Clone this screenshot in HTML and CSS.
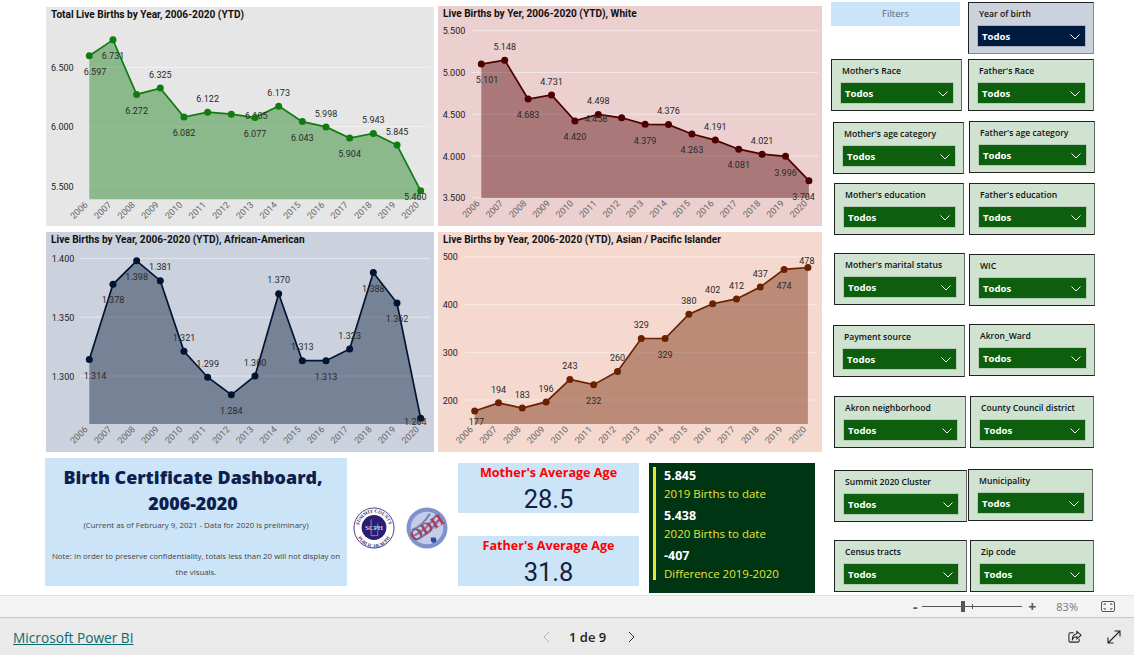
FILE: index.html
```html
<!DOCTYPE html>
<html lang="en">
<head>
  <meta charset="UTF-8">
  <meta name="viewport" content="width=device-width, initial-scale=1.0">
  <title>Birth Certificate Dashboard</title>
  <link rel="stylesheet" href="styles.css">
</head>
<body>

  <div id="report">
    <div id="left">

      <!-- Charts -->
      <div id="charts">
        <div class="chart chart-total">
          <div class="chart-title">Total Live Births by Year, 2006-2020 (YTD)</div>
          <svg id="chartTotal"></svg>
        </div>
        <div class="chart chart-white">
          <div class="chart-title">Live Births by Yer, 2006-2020 (YTD), White</div>
          <svg id="chartWhite"></svg>
        </div>
        <div class="chart chart-black">
          <div class="chart-title">Live Births by Year, 2006-2020 (YTD), African-American</div>
          <svg id="chartBlack"></svg>
        </div>
        <div class="chart chart-asian">
          <div class="chart-title">Live Births by Year, 2006-2020 (YTD), Asian / Pacific Islander</div>
          <svg id="chartAsian"></svg>
        </div>
      </div>

      <!-- Bottom row -->
      <div id="bottom">
        <div class="intro">
          <h1>Birth Certificate Dashboard, 2006-2020</h1>
          <p class="intro-date">(Current as of February 9, 2021 - Data for 2020 is preliminary)</p>
          <p class="intro-note">Note: In order to preserve confidentiality, totals less than 20 will not display on the visuals.</p>
        </div>

        <div class="logos">
          <svg class="logo" viewBox="0 0 44 44">
            <defs>
              <path id="arcTop" d="M6 22a16 16 0 0 1 32 0"/>
              <path id="arcBottom" d="M3.500 24a18.500 18.500 0 0 0 37 0"/>
            </defs>
            <circle cx="22" cy="22" r="21" fill="#fff" stroke="#4a3a86" stroke-width="1"/>
            <circle cx="22" cy="21.500" r="13" fill="#2b1d72"/>
            <path d="M19 13v17h7V17" fill="none" stroke="#c9c5e6" stroke-width=".6"/>
            <text class="logo-ring" font-size="5"><textPath href="#arcTop" startOffset="50%" text-anchor="middle">SUMMIT COUNTY</textPath></text>
            <text class="logo-ring" font-size="5"><textPath href="#arcBottom" startOffset="50%" text-anchor="middle">PUBLIC HEALTH</textPath></text>
            <text class="logo-mark" x="22" y="24" font-size="7.500">SCPH</text>
          </svg>
          <svg class="logo" viewBox="0 0 44 44">
            <circle cx="22" cy="22" r="21.500" fill="#7f92cb"/>
            <circle cx="22" cy="22" r="17" fill="#c3cde8"/>
            <path d="M8 30c8-3 18-12 24-22M11 34c8-3 19-13 25-22M6 24c7-2 14-9 19-17" fill="none" stroke="#6d80c0" stroke-width="2.200"/>
            <text class="logo-odh" x="22" y="27.500" font-size="17" transform="rotate(-32 22 22)">ODH</text>
            <path d="M26 32h5l1 4-3 2-3-2z" fill="#2e4aa8"/>
          </svg>
        </div>

        <div class="kpis">
          <div class="kpi">
            <div class="kpi-title">Mother's Average Age</div>
            <div class="kpi-value">28.5</div>
          </div>
          <div class="kpi">
            <div class="kpi-title">Father's Average Age</div>
            <div class="kpi-value">31.8</div>
          </div>
        </div>

        <div class="totals">
          <div class="totals-inner">
            <div class="total-item">
              <div class="total-num">5.845</div>
              <div class="total-label">2019 Births to date</div>
            </div>
            <div class="total-item">
              <div class="total-num">5.438</div>
              <div class="total-label">2020 Births to date</div>
            </div>
            <div class="total-item">
              <div class="total-num">-407</div>
              <div class="total-label">Difference 2019-2020</div>
            </div>
          </div>
        </div>
      </div>
    </div>

    <!-- Filters -->
    <div id="filters">
      <div class="filters-head">Filters</div>
      <div class="slicer navy r-a"><span>Year of birth</span><div class="drop">Todos<svg viewBox="0 0 10 6"><path d="M.5.5 5 5 9.5.5"/></svg></div></div>

      <div class="slicer l-a"><span>Mother's Race</span><div class="drop">Todos<svg viewBox="0 0 10 6"><path d="M.5.5 5 5 9.5.5"/></svg></div></div>
      <div class="slicer r-a"><span>Father's Race</span><div class="drop">Todos<svg viewBox="0 0 10 6"><path d="M.5.5 5 5 9.5.5"/></svg></div></div>

      <div class="slicer l-b down"><span>Mother's age category</span><div class="drop">Todos<svg viewBox="0 0 10 6"><path d="M.5.5 5 5 9.5.5"/></svg></div></div>
      <div class="slicer r-b"><span>Father's age category</span><div class="drop">Todos<svg viewBox="0 0 10 6"><path d="M.5.5 5 5 9.5.5"/></svg></div></div>

      <div class="slicer l-c"><span>Mother's education</span><div class="drop">Todos<svg viewBox="0 0 10 6"><path d="M.5.5 5 5 9.5.5"/></svg></div></div>
      <div class="slicer r-b"><span>Father's education</span><div class="drop">Todos<svg viewBox="0 0 10 6"><path d="M.5.5 5 5 9.5.5"/></svg></div></div>

      <div class="slicer l-d"><span>Mother's marital status</span><div class="drop">Todos<svg viewBox="0 0 10 6"><path d="M.5.5 5 5 9.5.5"/></svg></div></div>
      <div class="slicer r-b down"><span>WIC</span><div class="drop">Todos<svg viewBox="0 0 10 6"><path d="M.5.5 5 5 9.5.5"/></svg></div></div>

      <div class="slicer l-e down"><span>Payment source</span><div class="drop">Todos<svg viewBox="0 0 10 6"><path d="M.5.5 5 5 9.5.5"/></svg></div></div>
      <div class="slicer r-b"><span>Akron_Ward</span><div class="drop">Todos<svg viewBox="0 0 10 6"><path d="M.5.5 5 5 9.5.5"/></svg></div></div>

      <div class="slicer l-f"><span>Akron neighborhood</span><div class="drop">Todos<svg viewBox="0 0 10 6"><path d="M.5.5 5 5 9.5.5"/></svg></div></div>
      <div class="slicer r-c"><span>County Council district</span><div class="drop">Todos<svg viewBox="0 0 10 6"><path d="M.5.5 5 5 9.5.5"/></svg></div></div>

      <div class="slicer l-g down"><span>Summit 2020 Cluster</span><div class="drop">Todos<svg viewBox="0 0 10 6"><path d="M.5.5 5 5 9.5.5"/></svg></div></div>
      <div class="slicer r-d"><span>Municipality</span><div class="drop">Todos<svg viewBox="0 0 10 6"><path d="M.5.5 5 5 9.5.5"/></svg></div></div>

      <div class="slicer l-g"><span>Census tracts</span><div class="drop">Todos<svg viewBox="0 0 10 6"><path d="M.5.5 5 5 9.5.5"/></svg></div></div>
      <div class="slicer r-c"><span>Zip code</span><div class="drop">Todos<svg viewBox="0 0 10 6"><path d="M.5.5 5 5 9.5.5"/></svg></div></div>
    </div>
  </div>

  <!-- Zoom bar -->
  <div id="zoombar">
    <span class="zoom-sign">-</span>
    <div class="zoom-track"><i class="zoom-tick"></i><i class="zoom-thumb"></i></div>
    <span class="zoom-sign">+</span>
    <span class="zoom-pct">83%</span>
    <svg class="zoom-fit" viewBox="0 0 14 11">
      <rect x=".5" y=".5" width="13" height="10" rx="1.5"/>
      <path d="M3 4V3h2M11 4V3H9M3 7v1h2M11 7v1H9"/>
    </svg>
  </div>

  <!-- Footer -->
  <div id="footer">
    <a class="brand" href="#">Microsoft Power BI</a>
    <div class="pager">
      <svg class="pager-off" viewBox="0 0 7 12"><path d="M6 1 1 6l5 5"/></svg>
      <span>1 de 9</span>
      <svg viewBox="0 0 7 12"><path d="M1 1l5 5-5 5"/></svg>
    </div>
    <div class="foot-icons">
      <svg viewBox="0 0 15 14">
        <path d="M6 2.500H2.500a1.500 1.500 0 0 0-1.500 1.500v7a1.500 1.500 0 0 0 1.500 1.500h8a1.500 1.500 0 0 0 1.500-1.500V9"/>
        <path d="M9.500 1 14 5l-4.500 4V6.800C7 6.800 5.200 8 4.500 10.500 4.500 6.800 6.500 3.800 9.500 3.500z"/>
      </svg>
      <svg viewBox="0 0 14 14">
        <path d="M1 13 13 1M7.500 1H13v5.500M1 7.500V13h5.500"/>
      </svg>
    </div>
  </div>

  <script src="charts.js"></script>
</body>
</html>
```

FILE: styles.css
```css
/* ====== RESET ====== */
html, body {
  margin: 0;
  padding: 0;
}

body {
  width: 1134px;
  height: 655px;
  overflow: hidden;
  background: white;
  font-family: 'Open Sans', sans-serif;
}

/* ====== REPORT CANVAS ====== */
#report {
  display: grid;
  grid-template-columns: 831px 1fr;
  height: 595px;
}

#left {
  padding: 6px 0 0 45px;
}

#charts {
  display: grid;
  grid-template-columns: 388px 384px;
  grid-template-rows: 220px 220px;
  column-gap: 4px;
  row-gap: 6px;
  margin-left: 1px;
}

.chart {
  display: flex;
  flex-direction: column;
}

.chart svg {
  flex: 1;
  min-height: 0;
  display: block;
  overflow: visible;
}

.chart-title {
  height: 16px;
  line-height: 16px;
  padding-left: 5px;
  font-family: 'Roboto', sans-serif;
  font-size: 10.1px;
  font-weight: 700;
  color: #111;
  white-space: nowrap;
}

.chart-total { background: #e6e6e6; margin-top: 1px; height: 219px; }
.chart-white { background: #eccfcf; }
.chart-black { background: #cbd2dd; }
.chart-asian { background: #f5d9cf; }

/* chart text */
.chart text {
  font-family: 'Roboto', sans-serif;
  font-size: 9px;
}
.tick-label { fill: #222; }
.year-label { fill: #666; }
.data-label { fill: #2a2a2a; text-anchor: middle; }

/* ====== BOTTOM ROW ====== */
#bottom {
  display: flex;
  margin-top: 6px;
}

.intro {
  width: 302px;
  height: 128px;
  background: #cce4f8;
  text-align: center;
  color: #444;
}

.intro h1 {
  margin: 6px 0 0;
  padding: 0 6px 0 0;
  font-size: 17.9px;
  line-height: 26px;
  font-weight: 800;
  color: #0c1f4f;
}

.intro-date {
  margin: 2px 0 0;
  font-size: 7.9px;
  line-height: 14px;
}

.intro-note {
  margin: 16px 0 0;
  font-size: 7.9px;
  line-height: 16px;
}

.logos {
  width: 111px;
  display: flex;
  justify-content: center;
  gap: 11px;
  padding: 49px 4px 0 0;
  box-sizing: border-box;
}

.logo {
  width: 42px;
  height: 42px;
}

.logo text { text-anchor: middle; }
.logo-ring { fill: #2b1d72; font-family: 'Liberation Serif', serif; font-weight: 700; }
.logo-mark { fill: white; font-family: 'Liberation Serif', serif; }
.logo-odh { fill: #b23a55; font-family: 'Liberation Serif', serif; font-weight: 700; }

.kpis {
  width: 181px;
  padding-top: 5px;
  display: flex;
  flex-direction: column;
  gap: 23px;
}

.kpi {
  height: 50px;
  background: #cce4f8;
  text-align: center;
}

.kpi-title {
  height: 20px;
  line-height: 19px;
  font-size: 12.6px;
  font-weight: 700;
  color: #f00;
}

.kpi-value {
  line-height: 32px;
  font-family: 'Roboto', sans-serif;
  font-size: 25.5px;
  color: #14213d;
}

.totals {
  width: 166px;
  height: 130px;
  margin: 5px 0 0 10px;
  padding: 4px 0 0 4px;
  box-sizing: border-box;
  background: #003513;
}

.totals-inner {
  height: 113px;
  padding-left: 8px;
  border-left: 3px solid #e6e635;
  display: flex;
  flex-direction: column;
  gap: 5px;
}

.total-item { height: 35px; }

.total-num {
  line-height: 18px;
  font-size: 12.5px;
  font-weight: 700;
  color: white;
}

.total-label {
  line-height: 17px;
  font-size: 11.5px;
  color: #e6e635;
  white-space: nowrap;
}

/* ====== SLICERS ====== */
#filters {
  display: grid;
  grid-template-columns: 137px 128px;
  grid-template-rows: 57px 62px 62px 70px 71px 72px 73px 71px 52px;
  padding-top: 2px;
  align-items: start;
}

.filters-head {
  width: 129px;
  height: 24px;
  line-height: 24px;
  background: #cce4f8;
  text-align: center;
  font-size: 9.5px;
  color: #55687b;
}

.slicer {
  height: 52px;
  box-sizing: border-box;
  padding: 4px 8px 0 9px;
  background: #cfe3d0;
  border: 1px solid #222;
  border-right-color: #666;
}

.slicer span {
  display: block;
  height: 19px;
  line-height: 15px;
  padding-left: 1px;
  font-size: 8.6px;
  font-weight: 600;
  color: #111;
  white-space: nowrap;
}

.drop {
  height: 20px;
  box-sizing: border-box;
  display: flex;
  align-items: center;
  justify-content: space-between;
  padding: 1px 5px 0 4px;
  background: #0d5f0d;
  box-shadow: 0 0 0 1px #b5ccb6;
  font-size: 9.6px;
  font-weight: 700;
  color: white;
}

.drop svg {
  width: 10px;
  height: 6px;
  fill: none;
  stroke: white;
  stroke-width: 1;
}

.navy { background: #cbd2dd; border-right-color: #888; border-bottom-color: #888; }
.navy .drop { background: #001a40; box-shadow: 0 0 0 1px #aab3c2; }

/* the visuals on the report are not quite lined up */
.down { margin-top: 1px; }
.l-a { margin: 0 6px 0 0; }
.l-b { margin-left: 2px; margin-right: 4px; }
.l-c { margin-left: 3px; margin-right: 4px; }
.l-d { margin-left: 3px; margin-right: 3px; }
.l-e { margin-left: 2px; margin-right: 3px; }
.l-f { margin-left: 3px; margin-right: 2px; }
.l-g { margin-left: 3px; margin-right: 1px; }
.r-a { margin-left: 0; margin-right: 2px; }
.r-b { margin-left: 1px; margin-right: 1px; }
.r-c { margin-left: 2px; margin-right: 2px; }
.r-d { margin-left: 0; margin-right: 3px; }

/* ====== ZOOM BAR ====== */
#zoombar {
  height: 23px;
  box-sizing: border-box;
  display: flex;
  align-items: center;
  justify-content: flex-end;
  padding-right: 19px;
  background: #f3f3f3;
  border-top: 1px solid #e1e1e1;
  border-bottom: 1px solid #c8c8c8;
  color: #555;
}

.zoom-sign {
  width: 14px;
  text-align: center;
  font-size: 14px;
  font-weight: 700;
}

.zoom-track {
  position: relative;
  width: 100px;
  height: 1px;
  margin: 0 3px 0 0;
  background: #555;
}

.zoom-tick {
  position: absolute;
  left: 50px;
  top: -2px;
  width: 1px;
  height: 5px;
  background: #555;
}

.zoom-thumb {
  position: absolute;
  left: 39px;
  top: -5px;
  width: 4px;
  height: 11px;
  background: #555;
}

.zoom-pct {
  margin: 0 23px 0 17px;
  font-size: 11px;
  color: #777;
}

.zoom-fit {
  width: 14px;
  height: 11px;
  fill: none;
  stroke: #555;
  stroke-width: 1;
}

/* ====== FOOTER ====== */
#footer {
  height: 37px;
  box-sizing: border-box;
  padding-top: 1px;
  display: grid;
  grid-template-columns: 543px 105px 1fr;
  align-items: center;
  background: #eaeaea;
}

.brand {
  padding-left: 13px;
  font-size: 13.7px;
  color: #0b6a6e;
}

.pager {
  display: flex;
  align-items: center;
  font-size: 13px;
  font-weight: 600;
  color: #222;
}

.pager span {
  margin: 0 22px 0 19px;
}

.pager svg {
  width: 7px;
  height: 12px;
  fill: none;
  stroke: #333;
  stroke-width: 1;
}

.pager .pager-off { stroke: #b5b5b5; }

.foot-icons {
  display: flex;
  justify-content: flex-end;
  gap: 25px;
  padding-right: 13px;
}

.foot-icons svg {
  width: 14px;
  height: 14px;
  fill: none;
  stroke: #222;
  stroke-width: 1.1;
}
```

FILE: charts.js
```js
// Chart data, coordinates are page pixels
const years = [2006, 2007, 2008, 2009, 2010, 2011, 2012, 2013, 2014, 2015, 2016, 2017, 2018, 2019, 2020];
const UP = [0, -13.5];
const DOWN = [0, 16];

const charts = [
  {
    id: 'chartTotal', color: '#107c10', left: 89.3, step: 23.67, refValue: 6000, refY: 126.7, scale: 0.1188, base: 199.3,
    gridFrom: 89, gridTo: 430, tickX: 51, ticks: [5500, 6000, 6500],
    values: [6597, 6731, 6272, 6325, 6082, 6122, 6105, 6077, 6173, 6043, 5998, 5904, 5943, 5845, 5460],
    labels: [[5.7, 16.3], DOWN, DOWN, UP, DOWN, UP, [25, 1.3], DOWN, UP, DOWN, UP, DOWN, UP, UP, [-5.3, 5.7]]
  },
  {
    id: 'chartWhite', color: '#4e0000', left: 481.3, step: 23.4, refValue: 4000, refY: 156, scale: 0.0835, base: 198,
    gridFrom: 472, gridTo: 818, tickX: 442.7, ticks: [3500, 4000, 4500, 5000, 5500],
    values: [5101, 5148, 4683, 4731, 4420, 4498, 4458, 4379, 4376, 4263, 4191, 4081, 4021, 3996, 3704],
    labels: [[5.7, 16], UP, DOWN, UP, DOWN, UP, [-25.7, 1.3], DOWN, UP, DOWN, UP, DOWN, UP, DOWN, [-5.3, 15.7]]
  },
  {
    id: 'chartBlack', color: '#001433', left: 89.3, step: 23.67, refValue: 1300, refY: 376, scale: 1.176, base: 424,
    gridFrom: 80, gridTo: 430, tickX: 51.7, ticks: [1300, 1350, 1400],
    values: [1314, 1378, 1398, 1381, 1321, 1299, 1284, 1300, 1370, 1313, 1313, 1323, 1388, 1362, 1264],
    labels: [[5.7, 16.3], DOWN, DOWN, UP, UP, UP, DOWN, UP, UP, UP, DOWN, UP, DOWN, DOWN, [-5.3, 3]]
  },
  {
    id: 'chartAsian', color: '#6b2000', left: 474.7, step: 23.8, refValue: 200, refY: 400, scale: 0.4767, base: 424,
    gridFrom: 465, gridTo: 817, tickX: 442.7, ticks: [200, 300, 400, 500],
    values: [177, 194, 183, 196, 243, 232, 260, 329, 329, 380, 402, 412, 437, 474, 478],
    labels: [[1.7, 11], UP, UP, UP, UP, DOWN, UP, UP, DOWN, UP, UP, UP, UP, DOWN, [-1, -6.5]]
  }
];

// 6597 -> 6.597
function formatValue(v) {
  return v >= 1000 ? Math.floor(v / 1000) + '.' + String(v % 1000).padStart(3, '0') : String(v);
}

function drawChart(c) {
  const svg = document.getElementById(c.id);
  const box = svg.getBoundingClientRect();
  svg.setAttribute('viewBox', `${box.left} ${box.top} ${box.width} ${box.height}`);

  const px = i => c.left + c.step * i;
  const py = v => c.refY - (v - c.refValue) * c.scale;
  const line = c.values.map((v, i) => `${px(i).toFixed(1)},${py(v).toFixed(1)}`).join(' ');
  let out = '';

  c.ticks.forEach(t => {
    out += `<line x1="${c.gridFrom}" x2="${c.gridTo}" y1="${py(t)}" y2="${py(t)}" stroke="#fff" stroke-opacity=".5"/>`;
    out += `<text class="tick-label" x="${c.tickX}" y="${py(t) + 3.5}">${formatValue(t)}</text>`;
  });

  // area, then line and dots
  out += `<polygon points="${px(0)},${c.base} ${line} ${px(14)},${c.base}" fill="${c.color}" fill-opacity=".42"/>`;
  out += `<polyline points="${line}" fill="none" stroke="${c.color}" stroke-width="1.7"/>`;

  c.values.forEach((v, i) => {
    const [dx, dy] = c.labels[i];
    out += `<circle cx="${px(i)}" cy="${py(v)}" r="3.5" fill="${c.color}"/>`;
    out += `<text class="data-label" x="${px(i) + dx}" y="${py(v) + dy + 3.2}">${formatValue(v)}</text>`;
    const yx = px(i) - 1;
    const yy = c.base + 6;
    out += `<text class="year-label" x="${yx}" y="${yy}" text-anchor="end" transform="rotate(-45 ${yx} ${yy})">${years[i]}</text>`;
  });

  svg.innerHTML = out;
}

charts.forEach(drawChart);
```
